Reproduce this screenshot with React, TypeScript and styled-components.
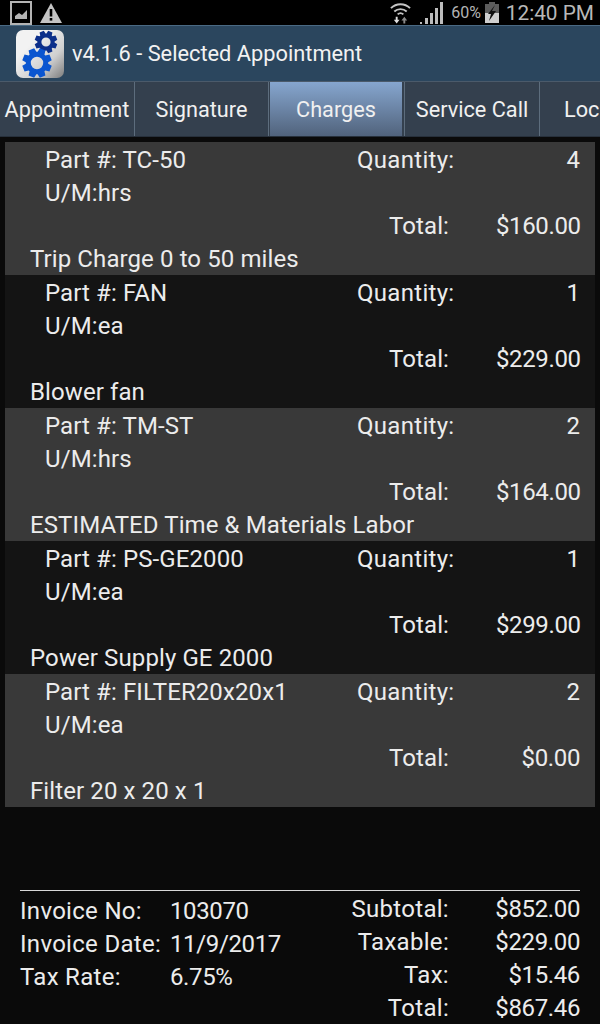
import React from 'react';
import styled, { createGlobalStyle } from 'styled-components';

const GlobalStyle = createGlobalStyle`
  html, body {
    margin: 0;
    padding: 0;
    background: #0a0a0a;
  }
  body {
    font-family: Roboto, "Liberation Sans", sans-serif;
  }
`;

const Screen = styled.div`
  width: 600px;
  height: 1024px;
  overflow: hidden;
  display: flex;
  flex-direction: column;
  background: #0a0a0a;
  color: #ececec;

  & > * {
    flex-shrink: 0;
  }
`;

const StatusBar = styled.div`
  height: 25px;
  background: #000;
  display: flex;
  align-items: center;
  justify-content: space-between;
  padding: 0 6px 0 10px;
`;

const StatusGroup = styled.div`
  display: flex;
  align-items: center;
`;

const BatteryLevel = styled.span`
  font-size: 16px;
  color: #b4b4b4;
  margin: 0 4px 0 7px;
  letter-spacing: -0.1px;
`;

const Clock = styled.span`
  font-size: 20.8px;
  color: #b8b8b8;
  margin-left: 7px;
`;

const ActionBar = styled.div`
  height: 56px;
  box-sizing: border-box;
  border-top: 1px solid #4a6a84;
  background: #2b465e;
  display: flex;
  align-items: center;
  gap: 8px;
  padding-left: 16px;
  font-size: 21.8px;
  color: #f2f2f2;
`;

const AppIcon = styled.div`
  width: 48px;
  height: 48px;
  border-radius: 7px;
  background: linear-gradient(135deg, #f2f2f2 30%, #cfcfcf 68%, #7c7c7c 100%);
  display: flex;
`;

const Tabs = styled.div`
  height: 56px;
  box-sizing: border-box;
  display: flex;
  overflow: hidden;
  background: #34404e;
  border-top: 1px solid #4b5a6a;
  border-bottom: 1px solid #27303b;
`;

const Tab = styled.div<{ $width: number }>`
  flex: 0 0 ${p => p.$width}px;
  box-sizing: border-box;
  display: flex;
  align-items: center;
  justify-content: center;
  white-space: nowrap;
  font-size: 21.7px;
  color: #f0f0f0;
  border-right: 1px solid #5d6d7d;
`;

const ActiveTab = styled(Tab)`
  margin: 0 3px 0 1px;
  border-right: none;
  background: linear-gradient(#86a6cf, #51637c);
  box-shadow: 2px 0 0 #34404e, 3px 0 0 #5d6d7d;
`;

const ClippedTab = styled(Tab)`
  justify-content: flex-start;
  padding-left: 24px;
  border-right: none;
`;

const List = styled.div`
  margin: 5px 5px 0;
  display: flex;
  flex-direction: column;
`;

const ItemRow = styled.div<{ $odd: boolean }>`
  height: 133px;
  box-sizing: border-box;
  background: ${p => (p.$odd ? '#393939' : '#141414')};
  font-size: 24px;
  letter-spacing: 0.1px;
  line-height: 33px;
  padding: 2px 15px 0 25px;
`;

const Line = styled.div`
  display: flex;
  height: 33px;
  white-space: nowrap;
`;

const PartCell = styled.span`
  flex: 0 0 327px;
  padding-left: 15px;
  box-sizing: border-box;
`;

const Label = styled.span`
  letter-spacing: 0.3px;
`;

const QtyLabel = styled(Label)`
  flex: 1;
`;

const Money = styled.span`
  letter-spacing: -0.37px;
`;

const TotalLine = styled(Line)`
  justify-content: flex-end;
`;

const TotalLabel = styled.span`
  margin-right: 47px;
`;

const TotalValue = styled(Money)`
  width: 84px;
  text-align: right;
`;

const Footer = styled.div`
  margin: 83px 20px 0;
  border-top: 1px solid #d8d8d8;
  padding-top: 2px;
  display: flex;
  font-size: 24px;
  line-height: 33px;
`;

const InvoiceGrid = styled.div`
  padding-top: 2px;
  display: grid;
  grid-template-columns: 150px auto;
  align-content: start;
  white-space: nowrap;
`;

const TotalsGrid = styled.div`
  margin-left: auto;
  display: grid;
  grid-template-columns: auto 131px;
  justify-items: end;
  align-content: start;
  white-space: nowrap;
`;

const GalleryIcon = () => (
  <svg width="22" height="24" viewBox="0 0 22 24">
    <rect x="1" y="1" width="20" height="22" fill="none" stroke="#b4b4b4" strokeWidth="2" />
    <path d="M5 18v-3l4-3 3 2 5-5v9z" fill="#b4b4b4" />
  </svg>
);

const WarningIcon = () => (
  <svg width="22" height="20" viewBox="0 0 22 20" style={{ marginLeft: 8 }}>
    <path d="M11 0L22 20H0z" fill="#c4c4c4" />
    <rect x="9.7" y="6" width="2.6" height="7.5" fill="#000" />
    <rect x="9.7" y="15" width="2.6" height="2.6" fill="#000" />
  </svg>
);

const WifiIcon = () => (
  <svg width="21" height="23" viewBox="0 0 22 23">
    <path d="M1 7a14 14 0 0 1 20 0" fill="none" stroke="#c4c4c4" strokeWidth="2" />
    <path d="M4.5 10.5a9.5 9.5 0 0 1 13 0" fill="none" stroke="#c4c4c4" strokeWidth="2" />
    <path d="M8 13.5a4.5 4.5 0 0 1 6 0" fill="none" stroke="#c4c4c4" strokeWidth="2" />
    <path d="M6 16h2v3h2l-3 4-3-4h2z" fill="#e0e0e0" />
    <path d="M14 23v-3h-2l3-4 3 4h-2v3z" fill="#8a8a8a" />
  </svg>
);

const SignalIcon = () => (
  <svg width="24" height="23" viewBox="0 0 24 23" style={{ marginLeft: 9 }}>
    <path d="M0 23h2v-2H0zM5 23h3v-6H5zM10 23h3V12h-3zM15 23h3V7h-3zM20 23h3V1h-3z" fill="#bcbcbc" />
  </svg>
);

const BatteryIcon = () => (
  <svg width="14" height="21" viewBox="0 0 14 21">
    <path d="M4 0h6v2h4v19H0V2h4z" fill="#5c5c5c" />
    <path d="M0 11h14v10H0z" fill="#cfcfcf" />
    <path d="M10 3L3 12h3l-2 7 7-10H7z" fill="#111" />
  </svg>
);

// toothed outline with a round hole, centred on 0,0
const gearPath = (outer: number, root: number, hole: number) => {
  const teeth = 8;
  const pts: string[] = [];
  for (let i = 0; i < teeth; i++) {
    const a = (i * 2 * Math.PI) / teeth + Math.PI / 8;
    const w = Math.PI / 14;
    [
      [root, a - w * 1.5],
      [outer, a - w * 0.9],
      [outer, a + w * 0.9],
      [root, a + w * 1.5],
    ].forEach(([r, t]) => pts.push(`${(r * Math.cos(t)).toFixed(2)} ${(r * Math.sin(t)).toFixed(2)}`));
  }
  return `M${pts.join('L')}ZM${hole} 0A${hole} ${hole} 0 1 0 ${-hole} 0A${hole} ${hole} 0 1 0 ${hole} 0Z`;
};

const GearsIcon = () => (
  <svg width="48" height="48" viewBox="0 0 48 48">
    <path d={gearPath(11.5, 8.6, 4.6)} transform="translate(30 12)" fill="#0c2f8a" fillRule="evenodd" />
    <path d={gearPath(15, 11.2, 6.2)} transform="translate(21 33)" fill="#0a55d0" fillRule="evenodd" />
  </svg>
);

const items = [
  { part: 'TC-50', qty: 4, um: 'hrs', total: '$160.00', desc: 'Trip Charge 0 to 50 miles' },
  { part: 'FAN', qty: 1, um: 'ea', total: '$229.00', desc: 'Blower fan' },
  { part: 'TM-ST', qty: 2, um: 'hrs', total: '$164.00', desc: 'ESTIMATED Time & Materials Labor' },
  { part: 'PS-GE2000', qty: 1, um: 'ea', total: '$299.00', desc: 'Power Supply GE 2000' },
  { part: 'FILTER20x20x1', qty: 2, um: 'ea', total: '$0.00', desc: 'Filter 20 x 20 x 1' },
];

const App: React.FC = () => {
  return (
    <Screen>
      <GlobalStyle />
      <StatusBar>
        <StatusGroup>
          <GalleryIcon />
          <WarningIcon />
        </StatusGroup>
        <StatusGroup>
          <WifiIcon />
          <SignalIcon />
          <BatteryLevel>60%</BatteryLevel>
          <BatteryIcon />
          <Clock>12:40 PM</Clock>
        </StatusGroup>
      </StatusBar>

      <ActionBar>
        <AppIcon>
          <GearsIcon />
        </AppIcon>
        v4.1.6 - Selected Appointment
      </ActionBar>

      <Tabs>
        <Tab $width={135}>Appointment</Tab>
        <Tab $width={134}>Signature</Tab>
        <ActiveTab $width={132}>Charges</ActiveTab>
        <Tab $width={135}>Service Call</Tab>
        <ClippedTab $width={60}>Loc</ClippedTab>
      </Tabs>

      <List>
        {items.map((item, i) => (
          <ItemRow key={item.part} $odd={i % 2 === 0}>
            <Line>
              <PartCell>Part #: {item.part}</PartCell>
              <QtyLabel>Quantity:</QtyLabel>
              <span>{item.qty}</span>
            </Line>
            <Line>
              <PartCell>U/M:{item.um}</PartCell>
            </Line>
            <TotalLine>
              <TotalLabel>Total:</TotalLabel>
              <TotalValue>{item.total}</TotalValue>
            </TotalLine>
            <Line>{item.desc}</Line>
          </ItemRow>
        ))}
      </List>

      <Footer>
        <InvoiceGrid>
          <Label>Invoice No:</Label>
          <Money>103070</Money>
          <Label>Invoice Date:</Label>
          <Money>11/9/2017</Money>
          <Label>Tax Rate:</Label>
          <Money>6.75%</Money>
        </InvoiceGrid>
        <TotalsGrid>
          <Label>Subtotal:</Label>
          <Money>$852.00</Money>
          <Label>Taxable:</Label>
          <Money>$229.00</Money>
          <Label>Tax:</Label>
          <Money>$15.46</Money>
          <Label>Total:</Label>
          <Money>$867.46</Money>
        </TotalsGrid>
      </Footer>
    </Screen>
  );
};

export default App;
